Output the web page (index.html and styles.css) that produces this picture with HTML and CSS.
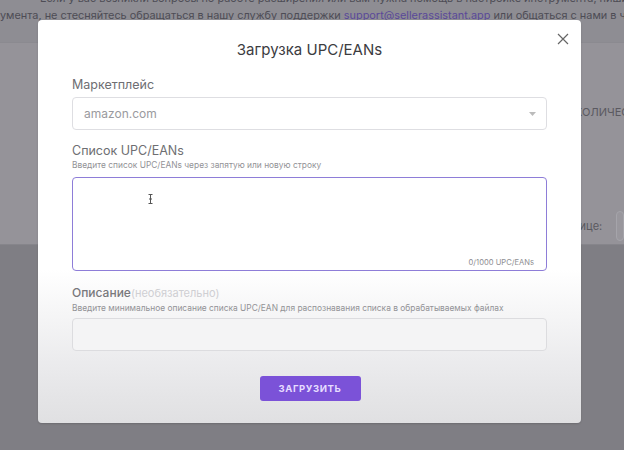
FILE: index.html
```html
<!DOCTYPE html>
<html lang="ru">
<head>
	<meta charset="UTF-8">
	<meta name="viewport" content="width=device-width, initial-scale=1.0">
	<title>Загрузка UPC/EANs</title>
<link rel="stylesheet" href="styles.css">
</head>
<body>

<div class="page">
	<div class="notice">
		<p class="noticeLine cutLine">Если у вас возникли вопросы по работе расширения или вам нужна помощь в настройке инструмента, пишите нам</p>
		<p class="noticeLine">умента, не стесняйтесь обращаться в нашу службу поддержки <span class="mail">support@sellerassistant.app</span> или общаться с нами в чате</p>
	</div>

	<div class="panel">
		<div class="panelHead">КОЛИЧЕСТВО</div>
		<div class="panelRow">
			<span class="panelLabel">Строк на странице:</span>
			<span class="panelInput"></span>
		</div>
	</div>
</div>

<!-- модальное окно поверх страницы -->
<div class="modal">
	<button class="closeBtn" aria-label="Закрыть">
		<svg width="12" height="12" viewBox="0 0 12 12"><path d="M1 1L11 11M11 1L1 11" stroke="#666" stroke-width="1.2" fill="none"/></svg>
	</button>

	<h1 class="modalTitle">Загрузка UPC/EANs</h1>

	<div class="field">
		<div class="fieldLabel firstLabel">Маркетплейс</div>
		<div class="selectBox">
			<span class="selectValue">amazon.com</span>
			<svg class="caret" width="7" height="4" viewBox="0 0 7 4"><path d="M0 0H7L3.5 4Z" fill="#bbb"/></svg>
		</div>
	</div>

	<div class="field">
		<div class="fieldLabel listLabel">Список UPC/EANs</div>
		<div class="fieldHint">Введите список UPC/EANs через запятую или новую строку</div>
		<div class="areaBox">
			<span class="ibeam">
				<svg width="5" height="10" viewBox="0 0 5 10"><path d="M0.5 0.5H4.5M2.5 0.5V9.5M0.5 9.5H4.5M1 5H4" stroke="#555" stroke-width="1" fill="none"/></svg>
			</span>
			<span class="counter">0/1000 UPC/EANs</span>
		</div>
	</div>

	<div class="field">
		<div class="fieldLabel descLabel">Описание<span class="optional">(необязательно)</span></div>
		<div class="fieldHint descHint">Введите минимальное описание списка UPC/EAN для распознавания списка в обрабатываемых файлах</div>
		<div class="inputBox"></div>
	</div>

	<div class="btnRow">
		<button class="uploadBtn">ЗАГРУЗИТЬ</button>
	</div>
</div>

</body>
</html>
```

FILE: styles.css
```css
/* общие правила */
*{
	margin: 0;
	padding: 0;
	box-sizing: border-box;
}

body{
	width: 624px;
	height: 450px;
	overflow: hidden;
	background: #7f7e84;
	font-family: Inter, "Liberation Sans", sans-serif;
	position: relative;
}

/* страница за затемнением */
.page{
	height: 450px;
}

.notice{
	background: #8e8d93;
	height: 42px;
	overflow: hidden;
}

.noticeLine{
	font-size: 10.9px;
	line-height: 17px;
	color: #4d4c55;
	white-space: nowrap;
}

.cutLine{
	margin-top: -10px;
	margin-left: 40px;
}

.mail{
	color: #5a4999;
}

.panel{
	background: #959399;
	height: 203px;
	border-top: 1px solid #8b8a90;
	border-bottom: 1px solid #86858b;
	padding-top: 62px;
	padding-left: 581px;
	overflow: hidden;
	white-space: nowrap;
}

.panelHead{
	font-size: 11px;
	color: #5a5960;
	margin-left: -6px;
}

.panelRow{
	display: flex;
	align-items: center;
	gap: 14px;
	margin-top: 92px;
	margin-left: -84px;
}

.panelLabel{
	font-size: 11px;
	color: #5a5960;
}

.panelInput{
	width: 40px;
	height: 30px;
	border: 1px solid #a5a4aa;
	border-radius: 4px;
	background: #99979d;
}

/* модальное окно */
.modal{
	position: absolute;
	left: 38px;
	top: 20px;
	width: 543px;
	height: 403px;
	border-radius: 4px;
	padding: 20px 34px 0 34px;
	background: linear-gradient(to bottom, #ffffff 0%, #ffffff 62%, #ebebed 85%, #e0e0e2 100%);
	box-shadow: 0 1px 2px rgba(0,0,0,0.15);
}

.closeBtn{
	position: absolute;
	top: 13px;
	right: 12px;
	width: 12px;
	height: 12px;
	border: none;
	background: none;
	display: flex;
}

.modalTitle{
	font-size: 15px;
	font-weight: 400;
	line-height: 20px;
	color: #3c3c3f;
	text-align: center;
}

.fieldLabel{
	font-size: 12.5px;
	line-height: 16px;
	color: #6e6e72;
}

.firstLabel{
	margin-top: 17px;
	margin-bottom: 4px;
}

.listLabel{
	margin-top: 13px;
}

.descLabel{
	margin-top: 14px;
	font-size: 12px;
	font-weight: 500;
	color: #78787c;
}

.optional{
	font-size: 11px;
	font-weight: 400;
	color: #cfcfd3;
}

.fieldHint{
	font-size: 8.4px;
	line-height: 12px;
	color: #929296;
	margin-bottom: 6px;
}

.descHint{
	margin-top: 1px;
	margin-bottom: 4px;
}

.selectBox{
	height: 33px;
	border: 1px solid #dedee2;
	border-radius: 4px;
	display: flex;
	align-items: center;
	justify-content: space-between;
	padding: 0 10px 0 11px;
}

.selectValue{
	font-size: 12px;
	color: #9a9a9e;
}

.areaBox{
	position: relative;
	height: 94px;
	border: 1.5px solid #8e7dd8;
	border-radius: 4px;
	display: flex;
	align-items: flex-end;
	justify-content: flex-end;
	padding: 0 12px 3px 0;
}

.ibeam{
	position: absolute;
	left: 75px;
	top: 16px;
	display: flex;
}

.counter{
	font-size: 7.6px;
	color: #8e8e92;
}

.inputBox{
	height: 33px;
	border: 1px solid #dcdcdf;
	border-radius: 4px;
	background: #f4f4f5;
}

.btnRow{
	display: flex;
	justify-content: center;
	margin-top: 25px;
}

.uploadBtn{
	width: 101px;
	height: 25px;
	border: none;
	border-radius: 3px;
	background: #7b52d8;
	color: #e6ddff;
	font-family: Inter, "Liberation Sans", sans-serif;
	font-size: 9.5px;
	font-weight: 700;
	letter-spacing: 0.6px;
	margin-left: 1px;
}
```
